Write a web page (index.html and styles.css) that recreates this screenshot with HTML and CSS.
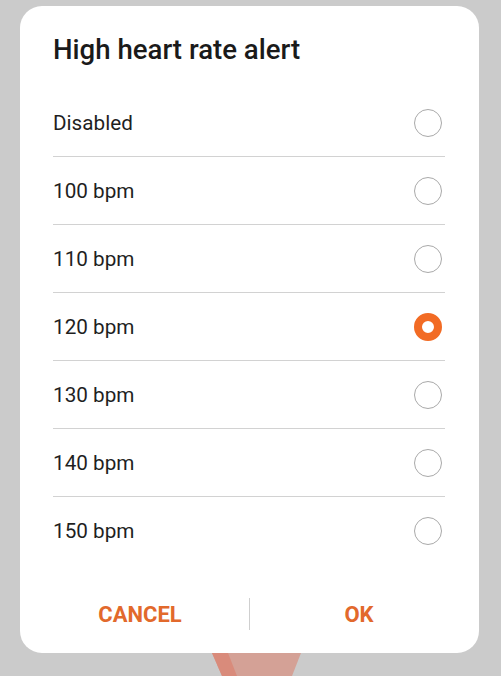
FILE: index.html
```html
<!DOCTYPE html>
<html lang="en">
<head>
    <meta charset="UTF-8" />
    <meta name="viewport" content="width=device-width, initial-scale=1.0" />
    <title>High heart rate alert</title>
    <link rel="stylesheet" href="styles.css">
</head>
<body>
    <div class="dialog">
        <h1 class="title">High heart rate alert</h1>
        <div class="options">
            <label class="option"><span>Disabled</span><span class="radio"></span></label>
            <label class="option"><span>100 bpm</span><span class="radio"></span></label>
            <label class="option"><span>110 bpm</span><span class="radio"></span></label>
            <label class="option"><span>120 bpm</span><span class="radio checked"></span></label>
            <label class="option"><span>130 bpm</span><span class="radio"></span></label>
            <label class="option"><span>140 bpm</span><span class="radio"></span></label>
            <label class="option"><span>150 bpm</span><span class="radio"></span></label>
        </div>
        <div class="actions">
            <button class="action">CANCEL</button>
            <span class="divider"></span>
            <button class="action">OK</button>
        </div>
    </div>
    <svg class="strap" width="501" height="23" viewBox="0 0 501 23">
        <polygon points="212,0 301,0 292,23 222,23" fill="#d4a196" />
        <polygon points="212,0 228,0 237,23 222,23" fill="#d98b7b" />
    </svg>
</body>
</html>
```

FILE: styles.css
```css
body {
    margin: 0;
    height: 676px;
    overflow: hidden;
    background: #cbcbcb;
    font-family: Roboto, "Noto Sans", sans-serif;
    display: flex;
    flex-direction: column;
}
.dialog {
    margin: 6px 22px 0 20px;
    background: #fff;
    border-radius: 22px;
    padding: 0 0 9px;
}
.title {
    margin: 0 0 23px;
    padding: 28px 33px 0;
    font-size: 27.6px;
    line-height: 32px;
    font-weight: 500;
    color: #1a1a1a;
}
.options {
    margin: 0 34px 0 33px;
}
.option {
    height: 67px;
    display: flex;
    align-items: center;
    justify-content: space-between;
    border-bottom: 1px solid #d2d2d2;
    font-size: 20.7px;
    color: #1f1f1f;
}
.option:last-child {
    border-bottom: none;
}
.radio {
    width: 28px;
    height: 28px;
    box-sizing: border-box;
    border: 1.5px solid #a9a9a9;
    border-radius: 50%;
    margin-right: 3px;
}
.radio.checked {
    border: 8px solid #f26b24;
}
.actions {
    margin-top: 20px;
    height: 60px;
    padding: 0 11px;
    display: flex;
    align-items: center;
}
.action {
    flex: 1;
    height: 100%;
    border: none;
    background: none;
    font-family: Roboto, "Noto Sans", sans-serif;
    font-size: 22px;
    font-weight: 700;
    color: #e2692c;
    padding: 0;
}
.divider {
    width: 1px;
    height: 32px;
    background: #cfcfcf;
}
.strap {
    display: block;
    flex-shrink: 0;
}
```
